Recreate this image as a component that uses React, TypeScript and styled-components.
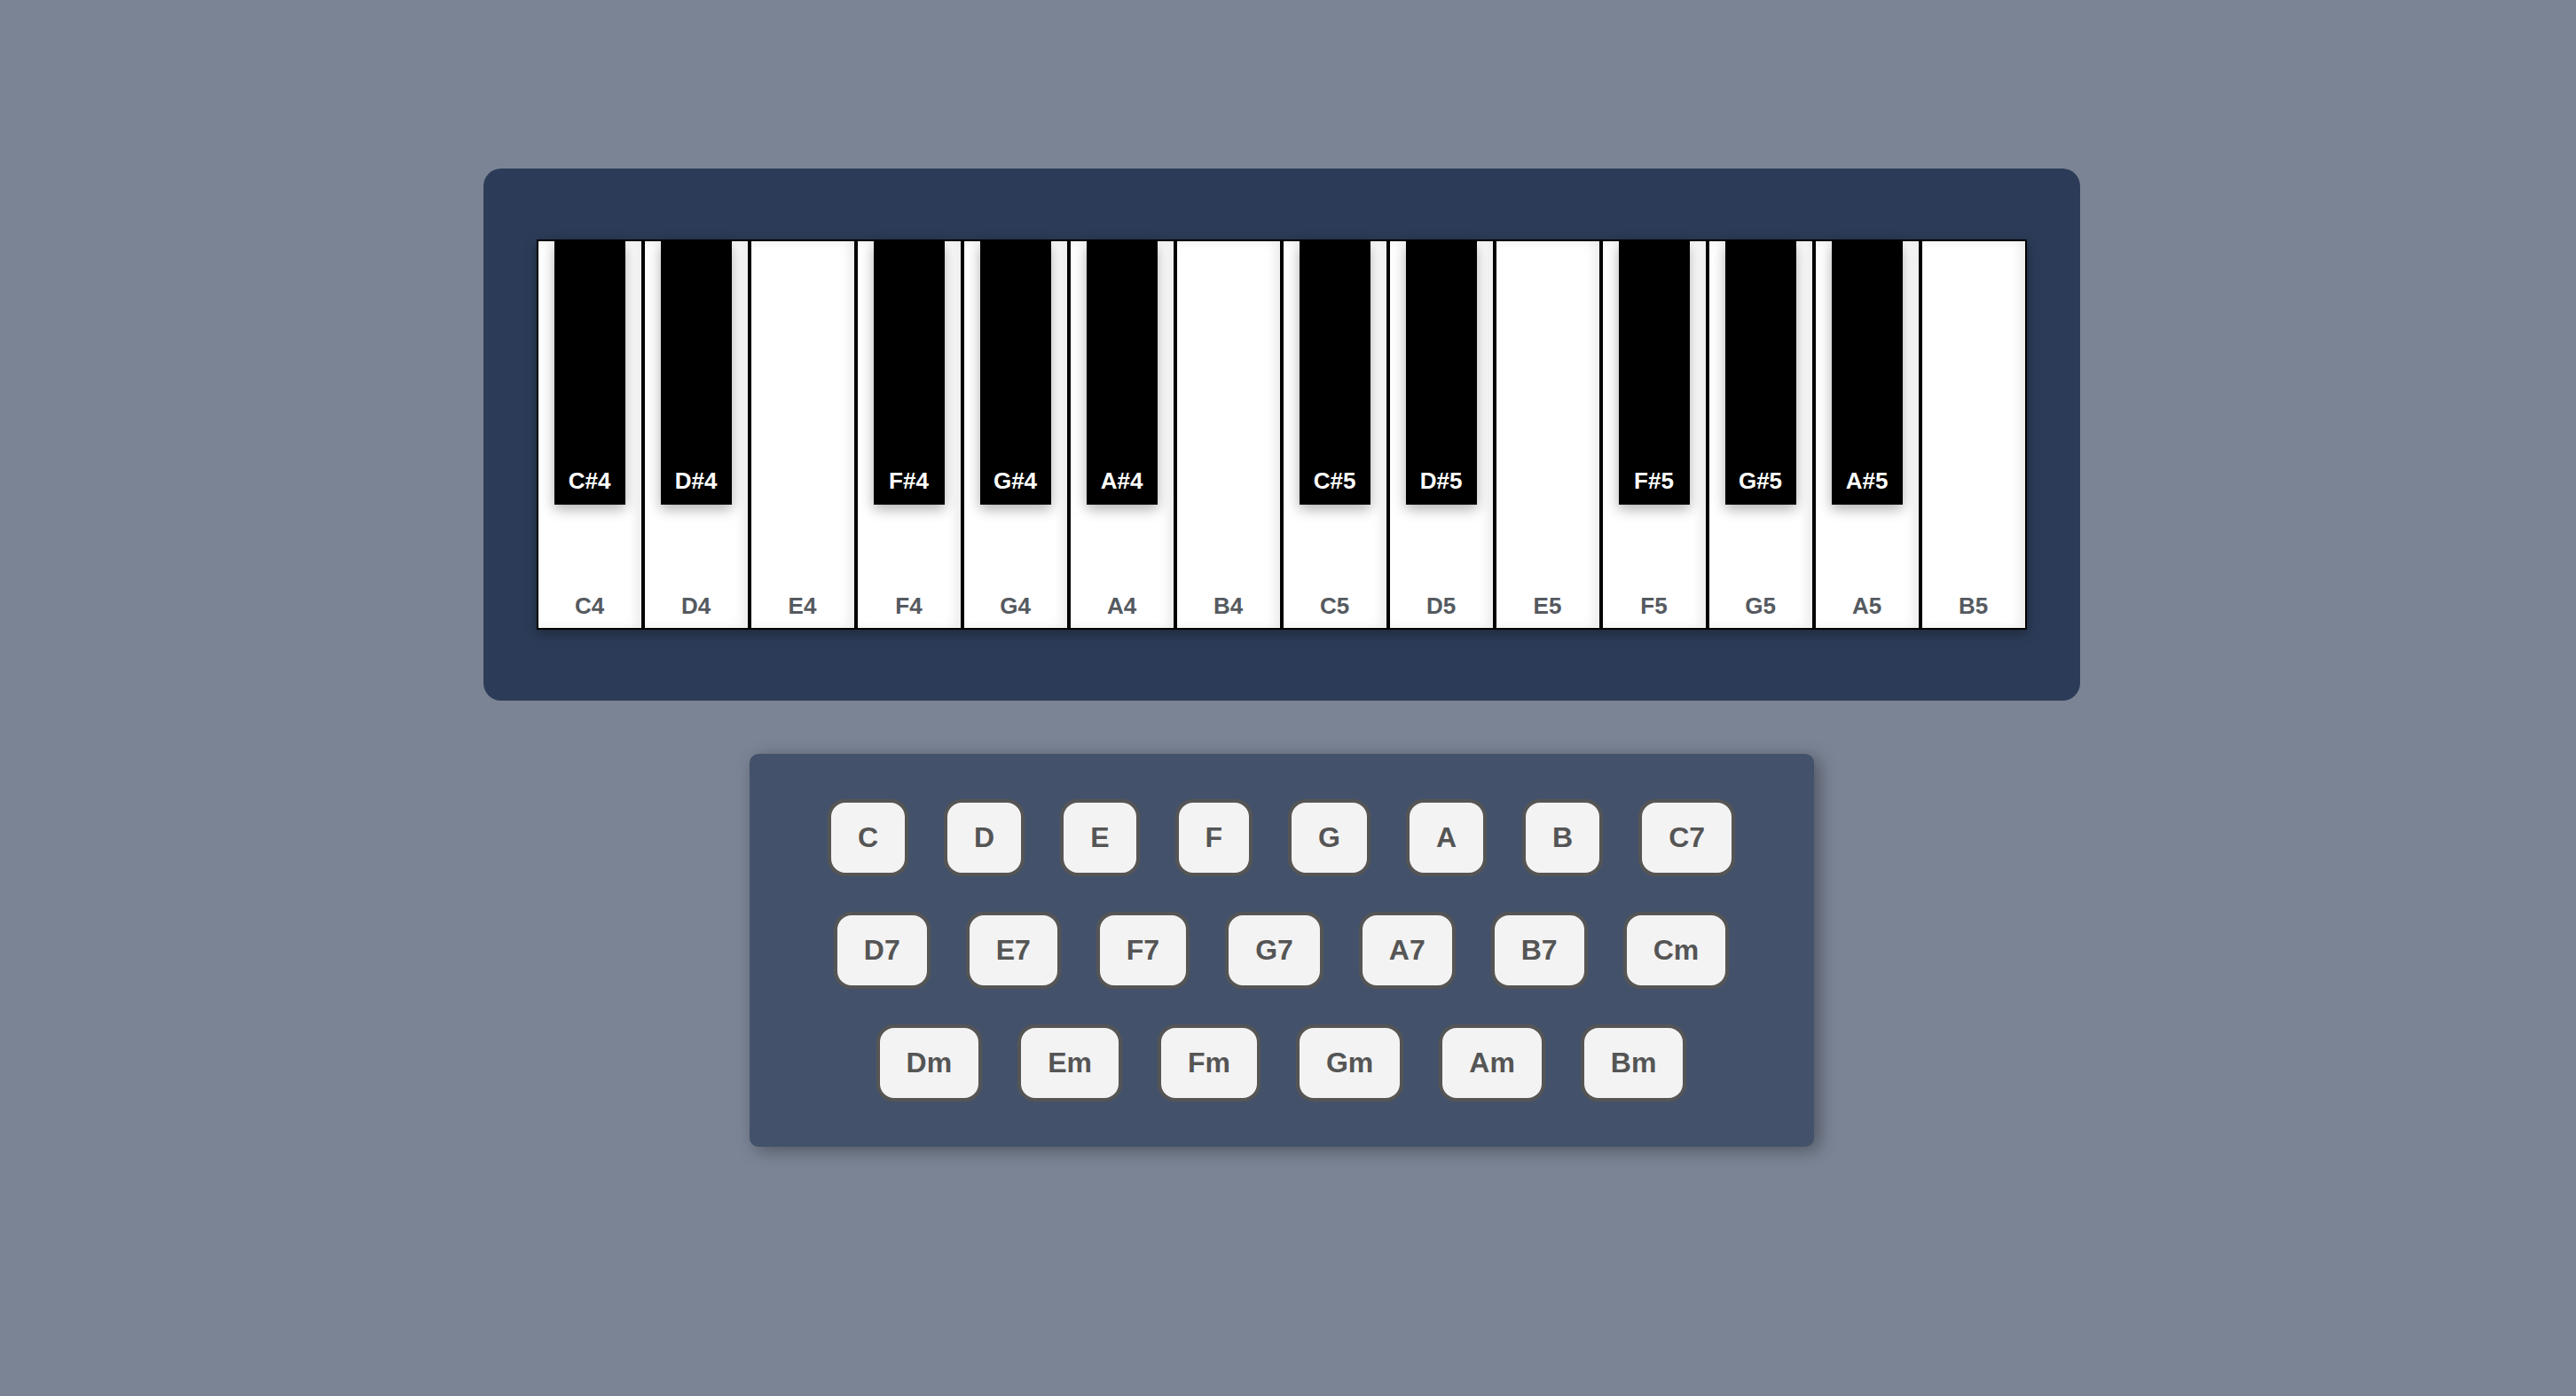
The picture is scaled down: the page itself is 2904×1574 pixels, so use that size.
import React from 'react';
import styled, {createGlobalStyle} from 'styled-components';

const GlobalStyle = createGlobalStyle`
  html, body {
    margin: 0;
    padding: 0;
    min-height: 100%;
    background-color: #7b8495;
    font-family: "Liberation Sans", Arial, Helvetica, sans-serif;
  }
`;

const Page = styled.div`
  display: flex;
  flex-direction: column;
  align-items: center;
  gap: 60px;
  min-height: 100vh;
  box-sizing: border-box;
  padding: 190px 15px 0 0;
`;

const PianoPanel = styled.div`
  width: 1800px;
  box-sizing: border-box;
  padding: 80px 60px;
  background-color: #2c3c58;
  border-radius: 20px;
`;

const Keyboard = styled.div`
  display: flex;
  width: 1680px;
  height: 440px;
  box-shadow: 0 4px 12px rgba(0, 0, 0, .35);
`;

const WhiteKey = styled.div`
  position: relative;
  display: flex;
  flex-direction: column;
  justify-content: flex-end;
  align-items: center;
  width: 120px;
  height: 100%;
  box-sizing: border-box;
  padding-bottom: 9px;
  background-color: #fff;
  border: 2px solid #000;
  box-shadow: inset -6px 0 12px rgba(0, 0, 0, .08);
`;

const BlackKey = styled.div`
  position: absolute;
  top: 0;
  left: 18px;
  z-index: 2;
  display: flex;
  flex-direction: column;
  justify-content: flex-end;
  align-items: center;
  width: 80px;
  height: 297px;
  box-sizing: border-box;
  padding-bottom: 11px;
  background-color: #000;
  box-shadow: 0 5px 14px rgba(0, 0, 0, .32);
`;

type KeyLabelPropsType = {
    $light?: boolean
}

const KeyLabel = styled.span<KeyLabelPropsType>`
  font-size: 26px;
  font-weight: bold;
  color: ${props => props.$light ? '#fff' : '#555a60'};
`;

const ChordPanel = styled.div`
  display: flex;
  flex-wrap: wrap;
  justify-content: center;
  gap: 40px;
  width: 1200px;
  box-sizing: border-box;
  padding: 51px 50px;
  background-color: #43526a;
  border-radius: 10px;
  box-shadow: 6px 4px 20px rgba(0, 0, 0, .35);
`;

const ChordButton = styled.button`
  padding: 21px 30px;
  font-family: inherit;
  font-size: 32px;
  font-weight: bold;
  line-height: normal;
  color: #555;
  background-color: #f3f3f3;
  border: 4px solid #555;
  border-radius: 20px;
  cursor: pointer;
`;

const whiteKeys = ['C4', 'D4', 'E4', 'F4', 'G4', 'A4', 'B4', 'C5', 'D5', 'E5', 'F5', 'G5', 'A5', 'B5'];
const withSharp = ['C', 'D', 'F', 'G', 'A'];

const chords = [
  'C', 'D', 'E', 'F', 'G', 'A', 'B', 'C7',
  'D7', 'E7', 'F7', 'G7', 'A7', 'B7', 'Cm',
  'Dm', 'Em', 'Fm', 'Gm', 'Am', 'Bm',
];

export default function App() {
  return <>
    <GlobalStyle/>
    <Page>
      <PianoPanel>
        <Keyboard>
          {whiteKeys.map(note => {
            const name = note[0];
            const octave = note.slice(1);
            return <WhiteKey key={note}>
              {withSharp.includes(name) &&
                <BlackKey>
                  <KeyLabel $light>{name}#{octave}</KeyLabel>
                </BlackKey>}
              <KeyLabel>{note}</KeyLabel>
            </WhiteKey>;
          })}
        </Keyboard>
      </PianoPanel>
      <ChordPanel>
        {chords.map(chord => <ChordButton key={chord}>{chord}</ChordButton>)}
      </ChordPanel>
    </Page>
  </>;
}
